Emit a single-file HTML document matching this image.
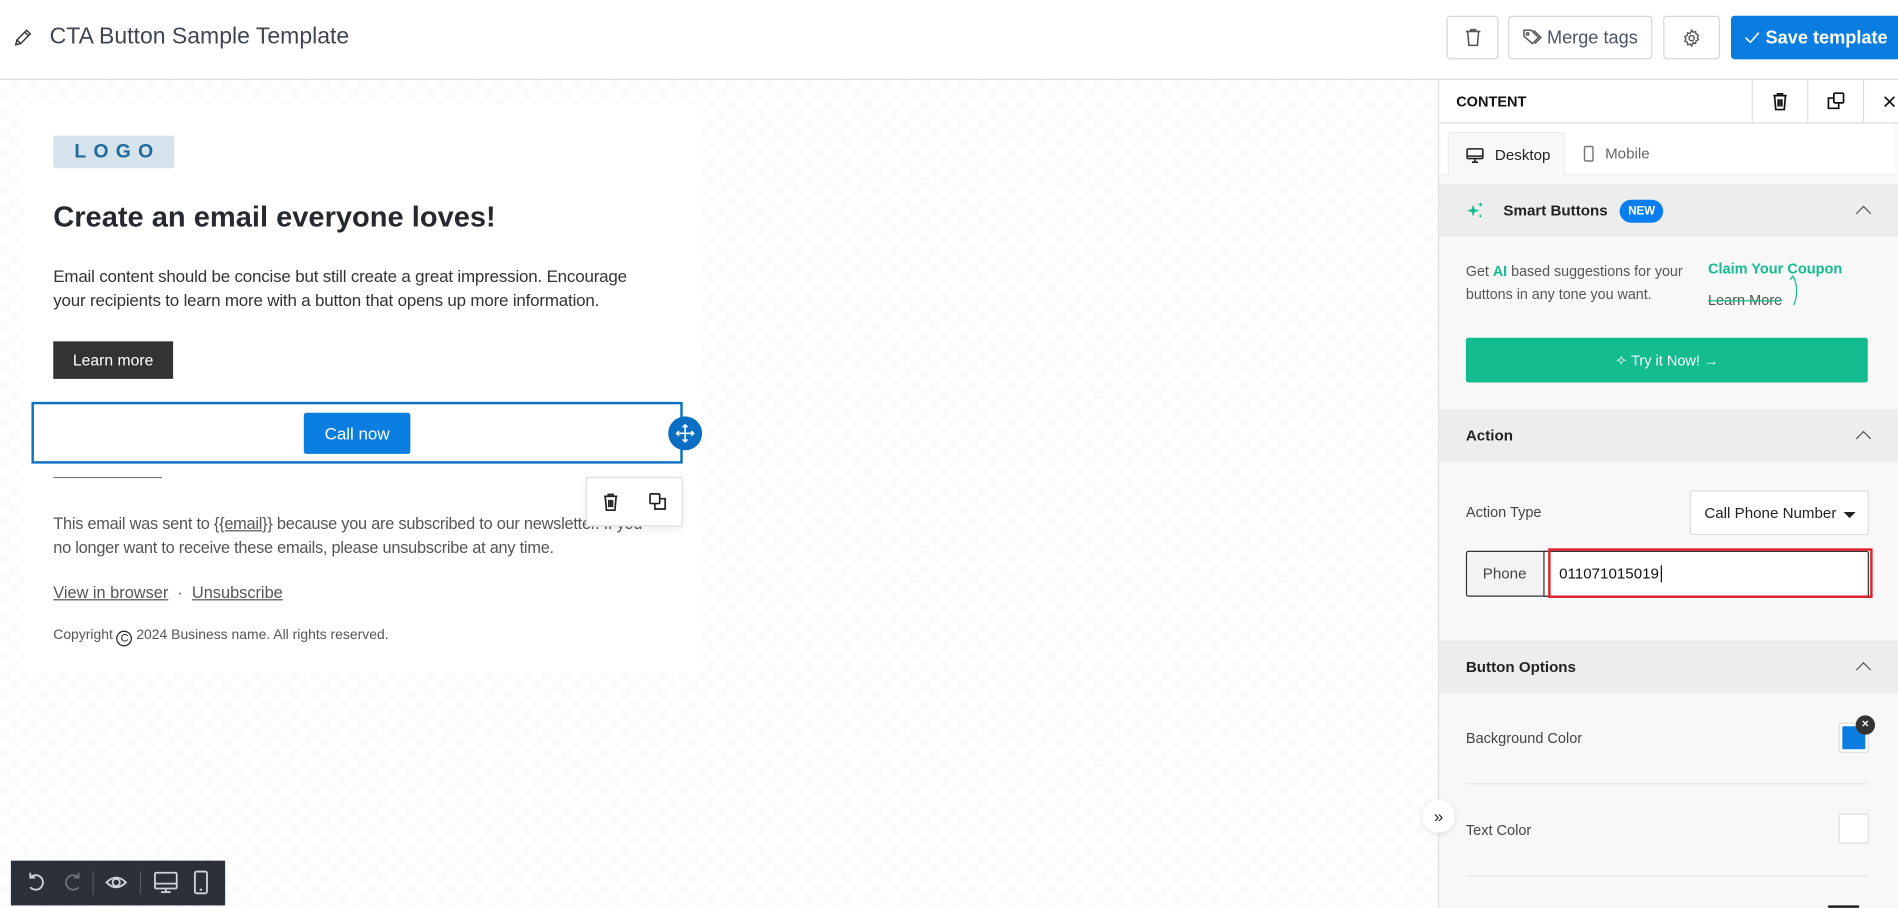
<!DOCTYPE html>
<html><head><meta charset="utf-8"><style>
*{box-sizing:border-box;margin:0;padding:0}
html,body{width:1898px;height:908px;overflow:hidden;background:#fff;font-family:"Liberation Sans",sans-serif}
#w{position:absolute;left:0;top:0;width:1568px;height:750px;transform:scale(1.21047);transform-origin:0 0}
.a{position:absolute}
.btn{position:absolute;border:1px solid #d4d6dc;border-radius:3px;background:#fff;display:flex;align-items:center;justify-content:center;color:#4b5563;font-size:15px}
.sec{position:absolute;left:1189px;width:379px;background:#ededed;font-size:12.5px;font-weight:bold;color:#222;padding-left:22px;display:flex;align-items:center}
.chev{position:absolute;right:24px;top:50%;width:9px;height:9px;border-left:1.3px solid #555;border-top:1.3px solid #555;transform:translateY(-25%) rotate(45deg)}
.lbl{position:absolute;font-size:12px;color:#444}
</style></head><body><div id="w">
<svg class="a" style="left:11px;top:23px" width="16" height="16" viewBox="0 0 16 16" fill="none" stroke="#333" stroke-width="1.2"><path d="M2 14l1-4 8-8 3 3-8 8z M9.5 3.5l3 3 M3 10l3 3"/></svg>
<div class="a" style="left:41px;top:20px;font-size:19px;color:#3f4652">CTA Button Sample Template</div>
<div class="btn" style="left:1195px;top:13px;width:43px;height:36px"><svg width="14" height="16" viewBox="0 0 14 16" fill="none" stroke="#555" stroke-width="1.3"><path d="M1 3h12M5 3V1.5h4V3M2.5 3l1 11.5h7l1-11.5"/></svg></div>
<div class="btn" style="left:1246px;top:13px;width:119px;height:36px;gap:4px"><svg width="16" height="14" viewBox="0 0 16 14" fill="none" stroke="#555" stroke-width="1.2"><path d="M1 1h6l6 6-5 5-7-6z M9 1l6 6-5 5"/><circle cx="4" cy="4" r="1"/></svg>Merge tags</div>
<div class="btn" style="left:1374px;top:13px;width:47px;height:36px"><svg width="15" height="15" viewBox="0 0 16 16" fill="none" stroke="#555" stroke-width="1.2"><circle cx="8" cy="8" r="2.3"/><path d="M8 1l1.3 1.8 2.2-.6.4 2.2 2.1 1-1 2 1 2-2.1 1-.4 2.2-2.2-.6L8 15l-1.3-1.8-2.2.6-.4-2.2-2.1-1 1-2-1-2 2.1-1 .4-2.2 2.2.6z"/></svg></div>
<div class="a" style="left:1430px;top:13px;width:140px;height:36px;background:#0a7ee0;border-radius:3px;color:#fff;font-size:15px;font-weight:bold;display:flex;align-items:center;justify-content:center;gap:5px"><svg width="13" height="10" viewBox="0 0 13 10" fill="none" stroke="#fff" stroke-width="1.3"><path d="M1 5l4 4 7-8"/></svg>Save template</div>
<div class="a" style="left:0;top:65px;width:1568px;height:1px;background:#d6d8de"></div>
<div class="a" style="left:0;top:66px;width:1188px;height:684px;background-color:#fff;background-image:linear-gradient(45deg,#fbfbfb 25%,transparent 25%,transparent 75%,#fbfbfb 75%),linear-gradient(45deg,#fbfbfb 25%,transparent 25%,transparent 75%,#fbfbfb 75%);background-size:16px 16px;background-position:0 0,8px 8px"></div>
<div class="a" style="left:20px;top:86px;width:560px;height:470px;background:#fff"></div>
<div class="a" style="left:44px;top:112px;width:100px;height:27px;background:#d5e3ec;border-radius:2px;color:#1f6a9a;font-weight:bold;font-size:16px;letter-spacing:6px;display:flex;align-items:center;justify-content:center;padding-left:6px">LOGO</div>
<div class="a" style="left:44px;top:166px;font-size:24px;font-weight:bold;color:#262a30">Create an email everyone loves!</div>
<div class="a" style="left:44px;top:218px;width:492px;font-size:14px;letter-spacing:-0.15px;line-height:20px;color:#333">Email content should be concise but still create a great impression. Encourage your recipients to learn more with a button that opens up more information.</div>
<div class="a" style="left:44px;top:282px;width:99px;height:31px;background:#333;color:#fff;font-size:13px;display:flex;align-items:center;justify-content:center">Learn more</div>
<div class="a" style="left:26px;top:332px;width:538px;height:51px;border:2px solid #0a6fc2;background:#fff"></div>
<div class="a" style="left:251px;top:341px;width:88px;height:34px;background:#0a7ee0;border-radius:2px;color:#fff;font-size:14px;display:flex;align-items:center;justify-content:center">Call now</div>
<div class="a" style="left:552px;top:344px;width:28px;height:28px;border-radius:50%;background:#0a6fc2;display:flex;align-items:center;justify-content:center"><svg width="16" height="16" viewBox="0 0 16 16" fill="none" stroke="#fff" stroke-width="1.3"><path d="M8 1v14M1 8h14M6 3l2-2 2 2M6 13l2 2 2-2M3 6L1 8l2 2M13 6l2 2-2 2"/></svg></div>
<div class="a" style="left:44px;top:394px;width:90px;height:1px;background:#777"></div>
<div class="a" style="left:484px;top:394px;width:80px;height:41px;background:#fff;border:1px solid #ddd;box-shadow:0 2px 6px rgba(0,0,0,.08);display:flex;align-items:center;justify-content:space-around;z-index:2"><svg width="13" height="16" viewBox="0 0 13 16" fill="none" stroke="#222" stroke-width="1.4"><path d="M1 3h11M4.5 3V1.5h4V3M2 3l1 11.5h7L11 3M5 6v6M6.5 6v6M8 6v6"/></svg><svg width="15" height="15" viewBox="0 0 15 15" fill="none" stroke="#222" stroke-width="1.4"><rect x="1" y="1" width="8" height="8" rx="1"/><path d="M9 5h4.5v8.5H5V9"/></svg></div>
<div class="a" style="left:44px;top:423px;width:500px;font-size:13.5px;letter-spacing:-0.2px;line-height:20px;color:#555">This email was sent to <u>{{email}}</u> because you are subscribed to our newsletter. If you no longer want to receive these emails, please unsubscribe at any time.</div>
<div class="a" style="left:44px;top:482px;font-size:13.5px;color:#555"><u>View in browser</u> &nbsp;·&nbsp; <u>Unsubscribe</u></div>
<div class="a" style="left:44px;top:519px;font-size:11.5px;color:#555">Copyright <span style="display:inline-block;width:13px;height:13px;border:1.3px solid #222;border-radius:50%;font-size:9px;text-align:center;line-height:11px;color:#222;vertical-align:-2px">C</span> 2024 Business name. All rights reserved.</div>
<div class="a" style="left:9px;top:711px;width:177px;height:37px;background:#2b303a"></div>
<svg class="a" style="left:9px;top:711px" width="177" height="37" viewBox="0 0 177 37" fill="none" stroke="#cfd3da" stroke-width="1.5"><path d="M16 14a6 6 0 1 1 0 8M16 10v4h4"/><path d="M56 14a6 6 0 1 0 0 8M56 10v4h-4" stroke="#6b717b"/><path d="M68 9v19M107 9v19" stroke="#555b66" stroke-width="1"/><path d="M79 18q8-8 16 0q-8 8-16 0z"/><circle cx="87" cy="18" r="3"/><rect x="119" y="10" width="18" height="13" rx="1"/><path d="M119 19h18M128 23v3M124 26h8"/><rect x="152" y="9" width="10" height="18" rx="1.5"/><path d="M156 24h2"/></svg>
<div class="a" style="left:1188px;top:66px;width:1px;height:684px;background:#ddd"></div>
<div class="a" style="left:1189px;top:66px;width:379px;height:684px;background:#f8f8f8"></div>
<div class="a" style="left:1189px;top:66px;width:379px;height:36px;background:#fff;border-bottom:1px solid #ddd"></div>
<div class="a" style="left:1203px;top:77px;font-size:12px;font-weight:bold;color:#111">CONTENT</div>
<div class="a" style="left:1447px;top:66px;width:1px;height:36px;background:#ddd"></div>
<div class="a" style="left:1493px;top:66px;width:1px;height:36px;background:#ddd"></div>
<div class="a" style="left:1539px;top:66px;width:1px;height:36px;background:#ddd"></div>
<svg class="a" style="left:1464px;top:76px" width="13" height="16" viewBox="0 0 13 16" fill="none" stroke="#111" stroke-width="1.4"><path d="M1 3h11M4.5 3V1.5h4V3M2 3l1 11.5h7L11 3M5 6v6M6.5 6v6M8 6v6"/></svg>
<svg class="a" style="left:1509px;top:76px" width="15" height="15" viewBox="0 0 15 15" fill="none" stroke="#111" stroke-width="1.4"><rect x="6" y="1" width="8" height="8" rx="1"/><path d="M6 5H1.5v8.5H10V9"/></svg>
<svg class="a" style="left:1556px;top:79px" width="10" height="10" viewBox="0 0 10 10" stroke="#111" stroke-width="1.4"><path d="M1 1l8 8M9 1l-8 8"/></svg>
<div class="a" style="left:1189px;top:102px;width:376px;height:43px;background:#fff;border-bottom:1px solid #eee"></div>
<div class="a" style="left:1196px;top:109px;width:97px;height:37px;background:#f8f8f8;border:1px solid #eee;border-bottom:none;display:flex;align-items:center;padding-left:14px;gap:9px;font-size:12.5px;color:#222"><svg width="15" height="13" viewBox="0 0 15 13" fill="none" stroke="#222" stroke-width="1.3"><rect x="1" y="1" width="13" height="8" rx="1"/><path d="M1 7h13M5 12h5M7.5 9v3"/></svg>Desktop</div>
<div class="a" style="left:1308px;top:120px;display:flex;align-items:center;gap:9px;font-size:12.5px;color:#666"><svg width="9" height="14" viewBox="0 0 9 14" fill="none" stroke="#777" stroke-width="1.2"><rect x="1" y="1" width="7" height="12" rx="1"/></svg>Mobile</div>
<div class="sec" style="top:152px;height:44px"><svg width="16" height="16" viewBox="0 0 16 16" fill="#12bc8f" style="margin-right:15px"><path d="M6 3l1.2 3.8L11 8 7.2 9.2 6 13 4.8 9.2 1 8l3.8-1.2z M12 1l.6 1.4L14 3l-1.4.6L12 5l-.6-1.4L10 3l1.4-.6z M12 11l.5 1 1 .5-1 .5-.5 1-.5-1-1-.5 1-.5z"/></svg>Smart Buttons<span style="margin-left:10px;background:#0a7ef0;color:#fff;font-size:9.5px;border-radius:10px;padding:4px 7px">NEW</span><i class="chev"></i></div>
<div class="a" style="left:1211px;top:215px;width:190px;font-size:11.8px;line-height:19px;color:#555">Get <b style="color:#12bc8f">AI</b> based suggestions for your buttons in any tone you want.</div>
<div class="a" style="left:1411px;top:215px;font-size:12px;font-weight:bold;color:#12bc8f">Claim Your Coupon</div>
<div class="a" style="left:1411px;top:241px;font-size:12px;color:#555;text-decoration:line-through;text-decoration-color:#12bc8f">Learn More</div>
<svg class="a" style="left:1476px;top:226px" width="14" height="28" viewBox="0 0 14 28" fill="none" stroke="#12bc8f" stroke-width="1"><path d="M3 5l2-3 2 3M5 2q6 10 1 24"/></svg>
<div class="a" style="left:1211px;top:279px;width:332px;height:37px;background:#12bc8f;border-radius:2px;color:#fff;font-size:12px;display:flex;align-items:center;justify-content:center;gap:6px">✧ Try it Now! →</div>
<div class="sec" style="top:338px;height:44px">Action<i class="chev"></i></div>
<div class="lbl" style="left:1211px;top:416px">Action Type</div>
<div class="a" style="left:1396px;top:405px;width:148px;height:37px;background:#fff;border:1px solid #ddd;border-radius:2px;font-size:12.5px;color:#222;padding:11px 0 0 11px">Call Phone Number<span style="position:absolute;right:10px;top:17px;border-left:5px solid transparent;border-right:5px solid transparent;border-top:5px solid #222"></span></div>
<div class="a" style="left:1211px;top:455px;width:70px;height:38px;background:#f3f3f3;border:1px solid #333;border-radius:2px 0 0 2px;font-size:12.5px;color:#444;display:flex;align-items:center;justify-content:center;padding-right:6px">Phone</div>
<div class="a" style="left:1275px;top:455px;width:269px;height:38px;background:#fff;border:1px solid #333;border-radius:0 2px 2px 0;font-size:12.5px;color:#111;padding:11px 0 0 12px">011071015019<span style="border-left:1px solid #111;margin-left:1px"></span></div>
<div class="a" style="left:1279px;top:453px;width:268px;height:41px;border:2px solid #e0202a"></div>
<div class="sec" style="top:529px;height:44px">Button Options<i class="chev"></i></div>
<div class="lbl" style="left:1211px;top:603px">Background Color</div>
<div class="a" style="left:1519px;top:597px;width:25px;height:25px;border:1px solid #ddd;border-radius:2px;background:#fff;padding:2px"><div style="width:100%;height:100%;background:#0a7ee0;border-radius:1px"></div></div>
<div class="a" style="left:1533px;top:591px;width:16px;height:16px;border-radius:50%;background:#333;color:#fff;font-size:10px;font-weight:bold;text-align:center;line-height:16px">×</div>
<div class="a" style="left:1211px;top:647px;width:333px;height:1px;background:#e6e6e6"></div>
<div class="lbl" style="left:1211px;top:679px">Text Color</div>
<div class="a" style="left:1519px;top:672px;width:25px;height:25px;border:1px solid #ddd;border-radius:2px;background:#fff"></div>
<div class="a" style="left:1211px;top:723px;width:333px;height:1px;background:#e6e6e6"></div>
<div class="a" style="left:1510px;top:748px;width:26px;height:2px;background:#222;border-radius:2px"></div>
<div class="a" style="left:1175px;top:661px;width:27px;height:27px;border-radius:50%;background:#fff;box-shadow:0 1px 5px rgba(0,0,0,.12);font-size:14px;color:#222;text-align:center;line-height:26px">»</div>
</div></body></html>
